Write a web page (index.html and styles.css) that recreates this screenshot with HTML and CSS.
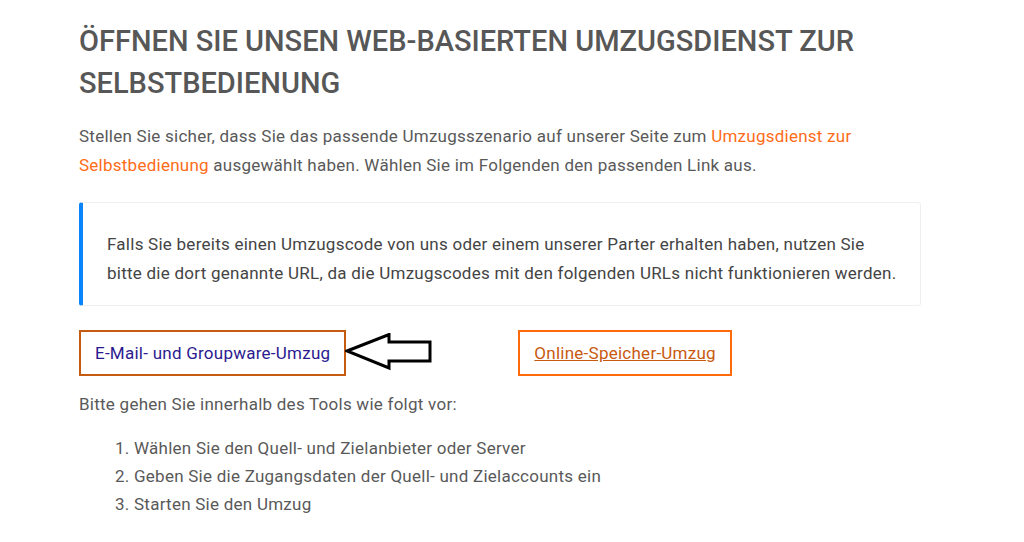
FILE: index.html
```html
<!DOCTYPE html>
<html lang="de">
<head>
	<meta charset="UTF-8">
	<title>Umzugsdienst</title>
	<link rel="stylesheet" href="styles.css">
</head>
<body>
	<div class="content">
		<h1>ÖFFNEN SIE UNSEN WEB-BASIERTEN UMZUGSDIENST ZUR SELBSTBEDIENUNG</h1>
		<p>Stellen Sie sicher, dass Sie das passende Umzugsszenario auf unserer Seite zum <a class="orange" href="#">Umzugsdienst zur Selbstbedienung</a> ausgewählt haben. Wählen Sie im Folgenden den passenden Link aus.</p>

		<div class="notice">
			<p>Falls Sie bereits einen Umzugscode von uns oder einem unserer Parter erhalten haben, nutzen Sie<br>bitte die dort genannte URL, da die Umzugscodes mit den folgenden URLs nicht funktionieren werden.</p>
		</div>

		<div class="links">
			<a class="box mail" href="#">E-Mail- und Groupware-Umzug</a>
			<svg class="arrow" width="90" height="40" viewBox="0 0 90 40">
				<polygon points="2,18 44,1.5 44,9 85,9 85,28 44,28 44,35" fill="#fff" stroke="#000" stroke-width="3" stroke-linejoin="miter"/>
			</svg>
			<a class="box storage" href="#">Online-Speicher-Umzug</a>
		</div>

		<p class="steps-intro">Bitte gehen Sie innerhalb des Tools wie folgt vor:</p>
		<ol class="steps">
			<li>Wählen Sie den Quell- und Zielanbieter oder Server</li>
			<li>Geben Sie die Zugangsdaten der Quell- und Zielaccounts ein</li>
			<li>Starten Sie den Umzug</li>
		</ol>
	</div>
</body>
</html>
```

FILE: styles.css
```css
/*common*/
*{
	margin: 0;
	padding: 0;
}
body{
	background-color: #fff;
	font-family: Roboto, "Liberation Sans", sans-serif;
	color: #595959;
	font-size: 17px;
	line-height: 29px;
	letter-spacing: 0.25px;
}
a{
	text-decoration: none;
}
.content{
	width: 842px;
	padding: 20px 0 0 79px;
}

/*heading*/
h1{
	font-size: 29px;
	line-height: 42px;
	font-weight: 500;
	color: #575757;
	letter-spacing: 0;
	margin-bottom: 18px;
}
.orange{
	color: #ff6c17;
}

/*notice*/
.notice{
	margin-top: 22px;
	border: 1px solid #efefef;
	border-left: 4px solid #0a84fb;
	border-radius: 3px;
	padding: 27px 16px 17px 24px;
	color: #444;
}

/*link boxes*/
.links{
	display: flex;
	align-items: center;
	margin-top: 24px;
}
.box{
	display: inline-block;
	padding: 0 14px;
	line-height: 42px;
	border: 2px solid #c55a11;
}
.mail{
	color: #2b1a8f;
}
.storage{
	color: #c8590f;
	border-color: #ff6a0d;
	text-decoration: underline;
	margin-left: 83px;
}
.arrow{
	display: block;
	margin-left: -1px;
}

/*steps*/
.steps-intro{
	margin-top: 14px;
}
.steps{
	margin-top: 15px;
	padding-left: 55px;
	line-height: 28px;
}
```
